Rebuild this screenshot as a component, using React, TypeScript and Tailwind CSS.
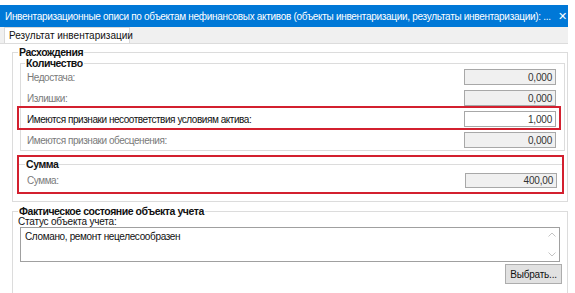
import React from 'react';

const rows = [
  { label: 'Недостача:', value: '0,000', marked: false },
  { label: 'Излишки:', value: '0,000', marked: false },
  { label: 'Имеются признаки несоответствия условиям актива:', value: '1,000', marked: true },
  { label: 'Имеются признаки обесценения:', value: '0,000', marked: false },
];

const font = { fontFamily: '"Liberation Sans", Tahoma, sans-serif' };

// read-only number box on the right
function NumBox({ value, white, h = 'h-[16px]' }: { value: string; white?: boolean; h?: string }) {
  return (
    <div
      className={`${h} w-[92px] border border-[#a8a8a8] ${white ? 'bg-white' : 'bg-[#f0f0f0]'} flex items-center justify-end pr-[3px] text-[10px] tracking-[-0.2px] text-[#333]`}
      style={font}
    >
      {value}
    </div>
  );
}

function Legend({ text, ml }: { text: string; ml: string }) {
  return (
    <legend className={`${ml} px-[1px] text-[10.5px] leading-[10px] font-bold tracking-[-0.45px] text-[#111]`} style={font}>
      {text}
    </legend>
  );
}

const App: React.FC = () => {
  return (
    <div className="w-[575px] h-[293px] bg-white overflow-hidden">
      <div className="w-[568px] pt-[5px]">
        {/* window title */}
        <div
          className="h-[22px] bg-[#0078d7] flex items-center pl-[5px] pr-[1px] text-white text-[10px] tracking-[-0.3px] whitespace-nowrap overflow-hidden"
          style={font}
        >
          <span>
            Инвентаризационные описи по объектам нефинансовых активов (объекты инвентаризации, результаты инвентаризации): ...
          </span>
          <span className="ml-auto text-[11px]">✕</span>
        </div>

        {/* tabs */}
        <div className="h-[17px] bg-[#f0f0f0] border-b border-[#dcdcdc] flex items-end">
          <div
            className="ml-[4px] h-[16px] w-[126px] bg-white border border-b-0 border-[#d9d9d9] pl-[4px] text-[10px] leading-[15px] whitespace-nowrap text-[#111]"
            style={font}
          >
            Результат инвентаризации
          </div>
        </div>

        <div className="pt-[3px]">
          {/* Расхождения */}
          <fieldset className="ml-[12px] w-[556px] border border-[#dcdcdc] pb-[7px]">
            <Legend text="Расхождения" ml="ml-[5px]" />

            <fieldset className="mt-[1px] ml-[7px] mr-[2px] border border-[#dcdcdc] pt-[1px] pb-[2px]">
              <Legend text="Количество" ml="ml-[4px]" />
              <div className="flex flex-col gap-[5px]">
                {rows.map((r) => (
                  <div key={r.label} className="relative h-[16px] flex items-center justify-between">
                    <span
                      className={`pl-[6px] text-[10px] tracking-[-0.45px] ${r.marked ? 'text-[#111]' : 'text-[#7a7a7a]'}`}
                      style={font}
                    >
                      {r.label}
                    </span>
                    <div className="mr-[8px]">
                      <NumBox value={r.value} white={r.marked} />
                    </div>
                    {r.marked && (
                      <div className="pointer-events-none absolute -top-[5px] -bottom-[3px] -left-[4px] right-[3px] border-2 border-[#d3202f]" />
                    )}
                  </div>
                ))}
              </div>
            </fieldset>

            {/* Сумма, marked */}
            <div className="mt-[4px] ml-[4px] mr-[3px] border-2 border-[#d3202f] pt-[2px] pb-[4px]">
              <fieldset className="border-0 border-t border-[#dcdcdc]">
                <Legend text="Сумма" ml="ml-[6px]" />
                <div className="pt-[4px] h-[19px] flex items-center justify-between">
                  <span className="pl-[8px] text-[10px] tracking-[-0.45px] text-[#7a7a7a]" style={font}>
                    Сумма:
                  </span>
                  <div className="mr-[5px]">
                    <NumBox value="400,00" h="h-[15px]" />
                  </div>
                </div>
              </fieldset>
            </div>
          </fieldset>

          {/* Фактическое состояние */}
          <fieldset className="mt-[4px] ml-[12px] w-[556px] border border-[#dcdcdc] pb-[10px] flex flex-col">
            <Legend text="Фактическое состояние объекта учета" ml="ml-[5px]" />
            <div className="mt-[1px] ml-[5px] text-[10px] leading-[10px] tracking-[-0.2px] text-[#111]" style={font}>
              Статус объекта учета:
            </div>
            <div className="ml-[7px] w-[540px] h-[35px] border border-[#a0a0a0] bg-white flex">
              <div className="flex-1 pl-[4px] pt-[3px] text-[10px] leading-[12px] tracking-[-0.35px] text-[#111]" style={font}>
                Сломано, ремонт нецелесообразен
              </div>
              <div className="w-[14px] flex flex-col items-center justify-between py-[4px] text-[#c4c4c4]">
                <svg width="8" height="5" viewBox="0 0 8 5" fill="none" stroke="currentColor" strokeWidth="1">
                  <path d="M0.5 4.5 L4 1 L7.5 4.5" />
                </svg>
                <svg width="8" height="5" viewBox="0 0 8 5" fill="none" stroke="currentColor" strokeWidth="1">
                  <path d="M0.5 0.5 L4 4 L7.5 0.5" />
                </svg>
              </div>
            </div>
            <div
              className="mt-[2px] self-end mr-[5px] h-[20px] w-[57px] bg-[#e1e1e1] border border-[#adadad] flex items-center justify-center text-[10px] tracking-[-0.2px] text-[#111]"
              style={font}
            >
              Выбрать...
            </div>
          </fieldset>
        </div>
      </div>
    </div>
  );
};

export default App;
